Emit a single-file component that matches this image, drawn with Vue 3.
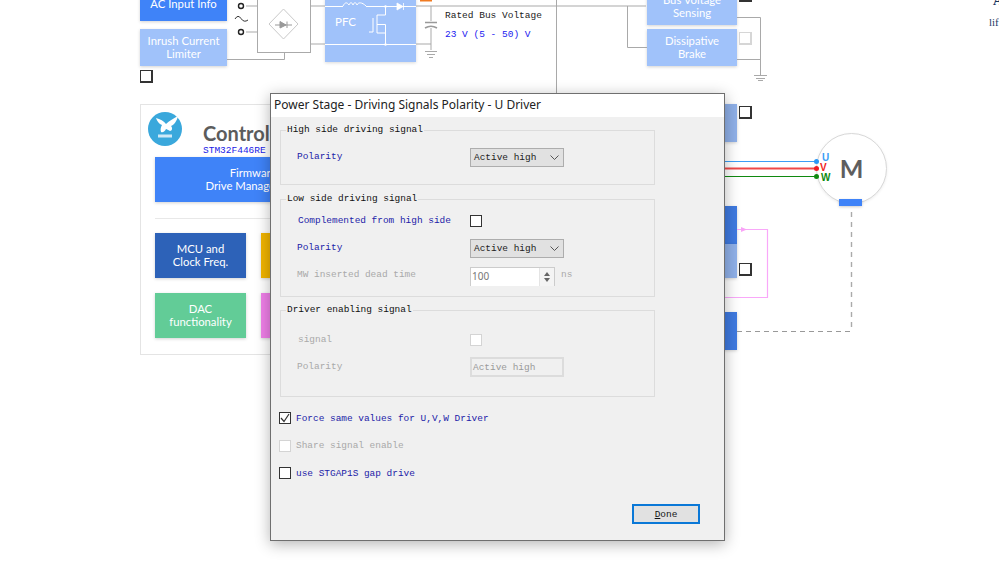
<script setup>
const blocks = [
  { id: 'ac', lines: ['AC Input Info'] },
  { id: 'inrush', lines: ['Inrush Current', 'Limiter'] },
  { id: 'sensing', lines: ['Bus Voltage', 'Sensing'] },
  { id: 'brake', lines: ['Dissipative', 'Brake'] },
  { id: 'fw', lines: ['Firmware', 'Drive Management'] },
  { id: 'mcu', lines: ['MCU and', 'Clock Freq.'] },
  { id: 'yellow', lines: [] },
  { id: 'dac', lines: ['DAC', 'functionality'] },
  { id: 'pink', lines: [] },
  { id: 'r1', lines: [] },
  { id: 'r2', lines: [] },
  { id: 'r3', lines: [] },
  { id: 'r4', lines: [] }
]
</script>

<template>
  <div class="page">
    <section class="canvas">
      <svg class="wires" width="999" height="577" viewBox="0 0 999 577" fill="none">
        <g stroke="#a9a9a9" stroke-width="1">
          <path d="M246 6H257M246 32H257M310 6H325M310 44H325M227 59.500H284.500V52" />
          <path d="M416 6H646M416 44H431M431 6V21M431 28V50M556.500 0V94" />
          <path d="M627.500 6V47.500H647" />
          <path d="M737 17.500H760.500V75M737 59.500H760.500" />
          <path d="M425 51.500H437M427 54.500H435M429 57.500H433" />
          <path d="M754 75.500H767M756 78.500H765M758 80.500H763" />
        </g>
        <path d="M425 22.500H437M425 28Q431 24.500 437 28" stroke="#999" stroke-width="1.600" />
        <circle cx="241" cy="6" r="2.500" fill="#fff" stroke="#222" stroke-width="1.400" />
        <circle cx="241" cy="32" r="2.500" fill="#fff" stroke="#222" stroke-width="1.400" />
        <path d="M235 19Q238 14 241 18.500T248 20" stroke="#333" stroke-width="1" />
        <path d="M283.500 9L298 24L283.500 39L269 24Z" stroke="#c9c9c9" stroke-width="1" />
        <path d="M275 25H292M280 21.500V28L286 25ZM287 21.500V28" stroke="#999" stroke-width="1" fill="#999" />
        <g stroke="#fff" stroke-width="1">
          <path d="M325 6.500H343M366 6.500H416M325 44.500H416" />
          <path d="M343 6C345 2 347 2 349 5C350 2 352 2 353 5C354 2 356 2 357 5C358 2 362 2 366 6" />
          <path d="M385.500 6V15H377V33H385.500V44M373 18V32H369" />
          <path d="M377 24.500H385.500V33" />
        </g>
        <circle cx="385.500" cy="6.500" r="1.200" fill="#fff" />
        <circle cx="385.500" cy="44.500" r="1.200" fill="#fff" />
        <path d="M397 3V10L403 6.500ZM403.500 3V10" fill="#fff" stroke="#fff" stroke-width=".8" />
        <path d="M420 0H432V1.500H420Z" fill="#f07b22" />
        <path d="M725 161.500H816" stroke="#3b9df5" stroke-width="1" />
        <path d="M725 168.500H816" stroke="#f04848" stroke-width="2" />
        <path d="M725 176.500H816" stroke="#108a10" stroke-width="1" />
        <path d="M737 229.500H767.500V297.500H725" stroke="#f9a8f9" stroke-width="1.200" />
        <path d="M741 227V232L747 229.500Z" fill="#f9a4f7" />
        <path d="M851.500 212V331.500" stroke="#aaa" stroke-width="1.400" stroke-dasharray="5 5" />
        <path d="M737 331.500H851" stroke="#999" stroke-width="1" stroke-dasharray="5 4" />
      </svg>

      <div v-for="b in blocks" :key="b.id" class="block" :class="b.id">
        <span v-for="l in b.lines" :key="l">{{ l }}</span>
      </div>

      <span class="pfc">PFC</span>
      <div class="bridge"></div>
      <span class="tick t1"></span>
      <span class="tick t2"></span>
      <span class="tick t3"></span>
      <span class="tick t4"></span>
      <span class="tick t5"></span>

      <div class="bus">
        <span>Rated Bus Voltage</span>
        <span class="bus-val">23 V (5 - 50) V</span>
      </div>

      <div class="panel">
        <div class="logo">
          <svg width="34" height="34" viewBox="0 0 34 34">
            <circle cx="17" cy="17" r="17" fill="#3aa8dc" />
            <path d="M8 6C12 7 16 9 18 12C21 9 26 6 30 4C29 9 26 13 23 14C25 16 24 19 22 19C20 18 19 17 18 17C17 19 15 21 13 20C12 17 13 15 14 13C11 12 9 9 8 6Z" fill="#fff" />
            <rect x="10" y="22.500" width="14" height="3" fill="#cfe9f7" />
          </svg>
        </div>
        <span class="control">Control</span>
        <span class="chip">STM32F446RE</span>
        <div class="rule"></div>
      </div>

      <div class="motor">
        <span>M</span>
        <i class="enc"></i>
      </div>
      <div class="phases">
        <b class="u">U</b>
        <b class="v">V</b>
        <b class="w">W</b>
      </div>
      <i class="dot du"></i>
      <i class="dot dv"></i>
      <i class="dot dw"></i>

      <span class="corner-a">A</span>
      <span class="corner-lif">lif</span>
    </section>

    <div class="dialog">
      <header class="title">Power Stage - Driving Signals Polarity - U Driver</header>
      <div class="body">
        <fieldset class="grp g1">
          <legend>High side driving signal</legend>
          <div class="row">
            <label class="lbl">Polarity</label>
            <div class="select">Active high
              <svg width="9" height="5" viewBox="0 0 9 5" fill="none"><path d="M.5 .5L4.500 4.500L8.500 .5" stroke="#555" /></svg>
            </div>
          </div>
        </fieldset>

        <fieldset class="grp g2">
          <legend>Low side driving signal</legend>
          <div class="row">
            <label class="lbl nudge">Complemented from high side</label>
            <span class="check"></span>
          </div>
          <div class="row">
            <label class="lbl">Polarity</label>
            <div class="select">Active high
              <svg width="9" height="5" viewBox="0 0 9 5" fill="none"><path d="M.5 .5L4.500 4.500L8.500 .5" stroke="#555" /></svg>
            </div>
          </div>
          <div class="row">
            <label class="lbl off">MW inserted dead time</label>
            <div class="spin">
              <span>100</span>
              <div class="arrows">
                <i class="up"></i>
                <i class="down"></i>
              </div>
            </div>
            <span class="unit">ns</span>
          </div>
        </fieldset>

        <fieldset class="grp g3">
          <legend>Driver enabling signal</legend>
          <div class="row">
            <label class="lbl off nudge">signal</label>
            <span class="check dim"></span>
          </div>
          <div class="row">
            <label class="lbl off">Polarity</label>
            <div class="select flat">Active high</div>
          </div>
        </fieldset>

        <div class="opts">
          <div class="opt">
            <span class="check">
              <svg width="10" height="10" viewBox="0 0 10 10" fill="none"><path d="M1 5L4 8.500L9 1" stroke="#333" stroke-width="1.200" /></svg>
            </span>
            <label class="lbl">Force same values for U,V,W Driver</label>
          </div>
          <div class="opt">
            <span class="check dim"></span>
            <label class="lbl off">Share signal enable</label>
          </div>
          <div class="opt">
            <span class="check"></span>
            <label class="lbl">use STGAP1S gap drive</label>
          </div>
        </div>

        <div class="foot">
          <button class="done"><u>D</u>one</button>
        </div>
      </div>
    </div>
  </div>
</template>

<style>
html, body { margin: 0; background: #fff; }
</style>

<style scoped>
.page { position: relative; width: 999px; height: 577px; overflow: hidden; background: #fff; }
.canvas { position: absolute; inset: 0; font-family: Lato, "Noto Sans", sans-serif; }
.wires { position: absolute; left: 0; top: 0; z-index: 2; }

.block {
  position: absolute; display: flex; flex-direction: column; align-items: center; justify-content: center;
  color: #fff; font-size: 11.300px; line-height: 12.500px; box-shadow: 0 1px 3px rgba(0,0,0,.18); z-index: 1;
}
.ac { left: 140px; top: -13px; width: 87px; height: 34px; background: #3f83f8; }
.inrush { left: 140px; top: 29px; width: 87px; height: 37px; background: #a0c2fa; }
.sensing { left: 647px; top: -12px; width: 90px; height: 37px; background: #a0c2fa; }
.brake { left: 647px; top: 29px; width: 90px; height: 37px; background: #a0c2fa; }
.fw { left: 155px; top: 157px; width: 196px; height: 45px; background: #3f83f8; }
.mcu { left: 155px; top: 233px; width: 91px; height: 45px; background: #2d62b8; }
.yellow { left: 261px; top: 233px; width: 40px; height: 45px; background: #f1b400; }
.dac { left: 155px; top: 293px; width: 91px; height: 45px; background: #62cc97; }
.pink { left: 261px; top: 293px; width: 40px; height: 45px; background: #ef7fe8; }
.r1 { left: 700px; top: 104px; width: 37px; height: 38px; background: #8fb0e8; }
.r2 { left: 700px; top: 206px; width: 37px; height: 38px; background: #3f7ae0; }
.r3 { left: 700px; top: 244px; width: 37px; height: 34px; background: #8fb0e8; }
.r4 { left: 700px; top: 312px; width: 37px; height: 38px; background: #3f7ae0; }

.bridge {
  position: absolute; left: 257px; top: -2px; width: 52px; height: 53px; border: 1px solid #aaa; background: #fff; z-index: 1;
}
.pfc { position: absolute; left: 335px; top: 15px; color: #fff; font-size: 11.500px; z-index: 3; }
.canvas::before {
  content: ""; position: absolute; left: 325px; top: -2px; width: 91px; height: 64px; background: #a0c2fa; box-shadow: 0 1px 3px rgba(0,0,0,.15);
}

.tick { position: absolute; width: 10px; height: 10px; border: 1px solid #333; border-bottom-width: 2px; border-right-width: 2px; background: #fff; z-index: 3; }
.t1 { left: 140px; top: 70px; }
.t2 { left: 739px; top: -11px; }
.t3 { left: 739px; top: 106px; }
.t4 { left: 739px; top: 32px; border-color: #d6d6d6; }
.t5 { left: 739px; top: 263px; }

.bus {
  position: absolute; left: 445px; top: 10px; display: flex; flex-direction: column; gap: 8px;
  font: 9.500px/11px "Liberation Mono", monospace; color: #222; z-index: 3;
}
.bus-val { color: #1a1af0; }

.panel {
  position: absolute; left: 140px; top: 104px; width: 400px; height: 249px; border: 1px solid #e4e4e4; background: #fff;
}
.logo { position: absolute; left: 7px; top: 7px; width: 34px; height: 34px; }
.control { position: absolute; left: 62px; top: 15px; font-size: 20px; line-height: 26px; font-weight: 700; color: #5c5c5c; }
.chip { position: absolute; left: 62px; top: 40px; font: 9.500px/11px "Liberation Mono", monospace; color: #1a1ae6; }
.rule { position: absolute; left: 14px; top: 113px; width: 300px; height: 1px; background: #e8e8e8; }

.motor {
  position: absolute; left: 816px; top: 133px; width: 71px; height: 71px; border-radius: 50%;
  border: 1px solid #d8d8d8; background: #fff; box-shadow: 0 1px 3px rgba(0,0,0,.08);
  display: flex; align-items: center; justify-content: center; box-sizing: border-box; z-index: 1;
}
.motor span { font: 700 25px/1 Lato, sans-serif; color: #5e5e5e; margin-top: -1px; }
.enc { position: absolute; left: 22px; top: 65px; width: 23px; height: 7px; background: #3f83f8; box-shadow: 0 1px 3px rgba(0,0,0,.2); }
.phases { position: absolute; left: 820px; top: 153px; display: flex; flex-direction: column; font: 700 10px/10px "Liberation Sans", sans-serif; z-index: 3; }
.u { color: #3b9df5; margin-left: 2px; }
.v { color: #f02020; }
.w { color: #108a10; margin-left: 1px; }
.dot { position: absolute; width: 5px; height: 5px; border-radius: 50%; left: 814px; z-index: 3; }
.du { top: 159px; background: #2a97f5; }
.dv { top: 166px; background: #ee1c25; }
.dw { top: 173.500px; background: #108a10; }

.corner-a { position: absolute; left: 993px; top: -6px; font: 700 14px/14px "Liberation Serif", serif; color: #16355e; }
.corner-lif { position: absolute; left: 989px; top: 16px; font: 11px/13px "Liberation Serif", serif; color: #1c3a66; }

.dialog {
  position: absolute; left: 270px; top: 93px; width: 455px; height: 448px; box-sizing: border-box;
  border: 1px solid #6f6f6f; background: #f0f0f0; box-shadow: 0 3px 14px rgba(0,0,0,.3);
  display: flex; flex-direction: column; z-index: 5;
}
.title {
  height: 23px; background: #fff; padding-left: 3px; font: 12px/22px "Noto Sans", sans-serif; color: #222; flex: none;
}
.body {
  flex: 1; display: flex; flex-direction: column; padding: 8px 9px 16px 9px;
  font: 9.450px/11px "Liberation Mono", monospace; color: #111;
}
.grp { box-sizing: border-box; width: 375px; margin: 0; padding: 0; border: 1px solid #dcdcdc; position: relative; flex: none; }
.grp legend { position: absolute; left: 5px; top: -7px; padding: 0 1px; background: #f0f0f0; line-height: 11px; }
.g1 { height: 55px; margin-top: 5px; padding-top: 17px; }
.g2 { height: 98px; margin-top: 14px; padding-top: 12px; display: flex; flex-direction: column; gap: 9px; }
.g3 { height: 87px; margin-top: 13px; padding-top: 20px; display: flex; flex-direction: column; gap: 9px; }
.row { display: flex; align-items: center; height: 18px; padding-left: 16px; position: relative; }
.lbl { color: #1c1ca8; }
.nudge { margin-left: 1px; }
.off { color: #a9a9a9; }
.row > .lbl { width: 173px; flex: none; margin-bottom: 2px; }
.row > .nudge { width: 172px; }
.select {
  width: 94px; height: 19px; box-sizing: border-box; border: 1px solid #adadad; background: #e1e1e1;
  display: flex; align-items: center; justify-content: space-between; padding: 0 4px 0 3px; color: #222;
}
.select.flat { background: #f0f0f0; border: 2px solid #dcdcdc; color: #9a9a9a; height: 20px; padding-left: 1px; }
.check {
  width: 12px; height: 12px; box-sizing: border-box; border: 1px solid #333; background: #fff;
  display: inline-flex; align-items: center; justify-content: center; flex: none;
}
.check.dim { border-color: #d4d4d4; }
.spin {
  width: 85px; height: 19px; margin-top: 2px; box-sizing: border-box; background: #fff; border: 1px solid #ccc; border-bottom: 0;
  display: flex; justify-content: space-between; align-items: center; color: #777; padding-left: 1px;
  font: 10px/11px "Noto Sans", sans-serif;
}
.arrows { width: 14px; height: 100%; display: flex; flex-direction: column; align-items: center; justify-content: center; gap: 2px; background: #f4f4f4; border-left: 1px solid #e4e4e4; }
.up, .down { width: 0; height: 0; border-left: 3px solid transparent; border-right: 3px solid transparent; }
.up { border-bottom: 4px solid #666; }
.down { border-top: 4px solid #666; }
.unit { margin-left: 6px; margin-bottom: 2px; color: #a9a9a9; }

.opts { display: flex; flex-direction: column; gap: 15.500px; margin-top: 15px; margin-left: -1px; }
.opt { display: flex; align-items: center; gap: 5px; height: 12px; }
.foot { margin-top: auto; display: flex; justify-content: flex-end; padding-right: 15px; }
.done {
  width: 68px; height: 20px; box-sizing: border-box; border: 2px solid #0a78d7; background: #e1e1e1;
  font: inherit; color: #111; padding: 0;
}
</style>
